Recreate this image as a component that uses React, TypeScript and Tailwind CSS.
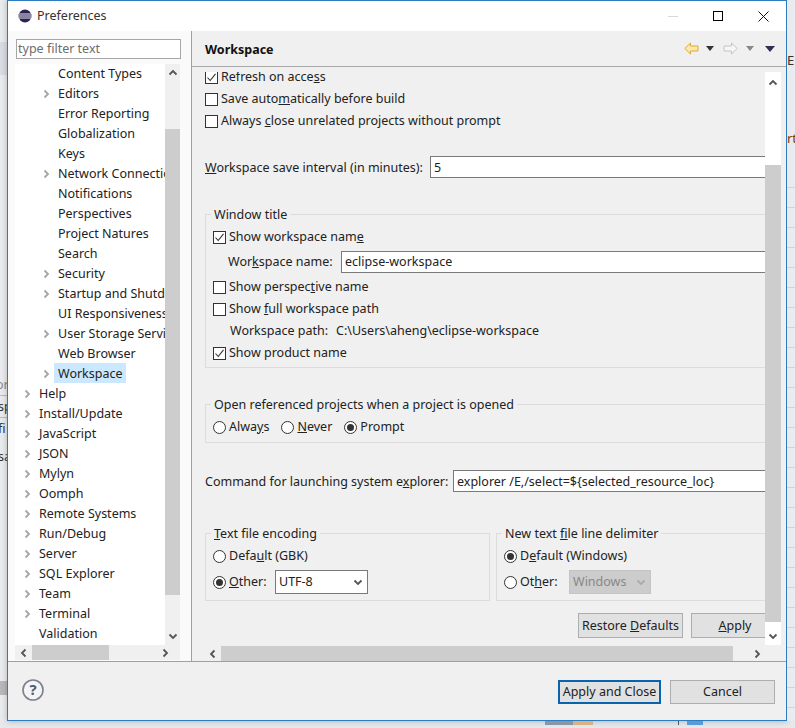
import type { ReactNode } from 'react'

const treeRows: [string, number, boolean][] = [
  ['Content Types', 2, false],
  ['Editors', 2, true],
  ['Error Reporting', 2, false],
  ['Globalization', 2, false],
  ['Keys', 2, false],
  ['Network Connections', 2, true],
  ['Notifications', 2, false],
  ['Perspectives', 2, false],
  ['Project Natures', 2, false],
  ['Search', 2, false],
  ['Security', 2, true],
  ['Startup and Shutdown', 2, true],
  ['UI Responsiveness', 2, false],
  ['User Storage Service', 2, true],
  ['Web Browser', 2, false],
  ['Workspace', 2, true],
  ['Help', 1, true],
  ['Install/Update', 1, true],
  ['JavaScript', 1, true],
  ['JSON', 1, true],
  ['Mylyn', 1, true],
  ['Oomph', 1, true],
  ['Remote Systems', 1, true],
  ['Run/Debug', 1, true],
  ['Server', 1, true],
  ['SQL Explorer', 1, true],
  ['Team', 1, true],
  ['Terminal', 1, true],
  ['Validation', 1, false],
]

const stripLines = Array.from({ length: 27 }, (_, i) => i)

function Chevron({ dir, color = '#666' }: { dir: 'up' | 'down' | 'left' | 'right'; color?: string }) {
  const d = {
    up: 'M1.5 6.5 L5 3 L8.5 6.5',
    down: 'M1.5 3.5 L5 7 L8.5 3.5',
    left: 'M6.5 1.5 L3 5 L6.5 8.5',
    right: 'M3.5 1.5 L7 5 L3.5 8.5',
  }[dir]
  return (
    <svg width="10" height="10" viewBox="0 0 10 10" className="shrink-0">
      <path d={d} fill="none" stroke={color} strokeWidth="1.8" />
    </svg>
  )
}

function Check({ on = false }: { on?: boolean }) {
  return (
    <span className="w-[13px] h-[13px] border border-[#333] bg-white shrink-0 flex items-center justify-center">
      {on && (
        <svg width="11" height="11" viewBox="0 0 11 11">
          <path d="M1.5 5.5 L4.2 8.5 L9.5 1.8" fill="none" stroke="#333" strokeWidth="1.1" />
        </svg>
      )}
    </span>
  )
}

function Radio({ on = false }: { on?: boolean }) {
  return (
    <span className="w-[13px] h-[13px] rounded-full border border-[#333] bg-white shrink-0 flex items-center justify-center">
      {on && <span className="w-[7px] h-[7px] rounded-full bg-[#333]" />}
    </span>
  )
}

function CheckRow({ on, children }: { on?: boolean; children: ReactNode }) {
  return (
    <div className="h-[22px] flex items-center gap-[3px] whitespace-nowrap">
      <Check on={on} />
      <span>{children}</span>
    </div>
  )
}

function RadioRow({ on, children }: { on?: boolean; children: ReactNode }) {
  return (
    <div className="h-[22px] flex items-center gap-[3px] whitespace-nowrap">
      <Radio on={on} />
      <span>{children}</span>
    </div>
  )
}

function Group({ title, className, children }: { title: ReactNode; className: string; children: ReactNode }) {
  return (
    <fieldset className={`border border-[#dcdcdc] pl-[7px] shrink-0 ${className}`}>
      <legend className="-ml-[2px] px-[3px] pt-px h-[18px] leading-[18px] whitespace-nowrap">{title}</legend>
      {children}
    </fieldset>
  )
}

function Field({ className, children }: { className: string; children: ReactNode }) {
  return (
    <div className={`h-[22px] border border-[#7a7a7a] bg-white flex items-center pl-[3px] whitespace-nowrap text-[#222] ${className}`}>
      <span>{children}</span>
    </div>
  )
}

function Button({ className, children }: { className: string; children: ReactNode }) {
  return (
    <div className={`flex items-center justify-center bg-[#e1e1e1] border-[#adadad] whitespace-nowrap ${className}`}>
      <span>{children}</span>
    </div>
  )
}

export default function App() {
  return (
    <div
      className="w-[795px] h-[728px] overflow-hidden bg-[#e6e8ec] flex flex-col text-[12.5px] text-[#222]"
      style={{ fontFamily: '"Noto Sans", "Liberation Sans", sans-serif' }}
    >
      <div className="h-[721px] flex shrink-0">
        <div className="w-[7px] shrink-0 bg-[#e9ebee] overflow-hidden text-[#333] flex flex-col leading-[21px]">
          <div className="mt-[42px] h-[33px] shrink-0 bg-[#d9dde3]" />
          <span className="mt-[299px] -ml-[4px] text-[#888]">or</span>
          <span className="-ml-[2px] border-t border-[#bbb]">sp</span>
          <span className="-ml-[2px] border-t border-[#bbb]">fi</span>
          <span className="-ml-[2px] mt-[7px]">sa</span>
          <div className="mt-[214px] h-[14px] shrink-0 bg-[#b8b8b8]" />
        </div>

        <div className="w-[780px] shrink-0 border border-[#2b7cc0] flex flex-col bg-[#f0f0f0] shadow-[0_0_6px_rgba(0,0,0,0.25)]">
          <div className="h-[30px] shrink-0 bg-white flex items-center pl-[10px] pr-[17px]">
            <svg width="14" height="14" viewBox="0 0 14 14">
              <circle cx="7" cy="7" r="6.5" fill="#2c2255" />
              <path d="M1 5 H13 M0.6 7 H13.4 M1 9 H13" stroke="#fff" strokeWidth="0.9" />
            </svg>
            <span className="ml-[5px] text-[#333]">Preferences</span>
            <span className="ml-auto w-[10px] h-px bg-[#d8d8d8]" />
            <span className="ml-[35px] w-[10px] h-[10px] border border-black" />
            <svg width="11" height="11" viewBox="0 0 11 11" className="ml-[35px]">
              <path d="M0.5 0.5 L10.5 10.5 M10.5 0.5 L0.5 10.5" stroke="#111" strokeWidth="1" />
            </svg>
          </div>

          <div className="h-[630px] shrink-0 flex">
            <div className="w-[184px] shrink-0 bg-[#fafafa] border-r border-[#a0a0a0] pt-[8px] pl-[7px]">
              <div className="ml-px w-[165px] h-[20px] border border-[#a6a6a6] bg-white pl-px flex items-center text-[#6d6d6d]">
                type filter text
              </div>
              <div className="mt-[5px] h-[581px] w-[165px] flex">
                <div className="w-[150px] shrink-0 bg-white overflow-hidden">
                  <div className="-mt-px">
                    {treeRows.map(([name, level, arrow]) => (
                      <div
                        key={name}
                        className={`h-[20px] flex items-center whitespace-nowrap ${level === 2 ? 'pl-[26px]' : 'pl-[7px]'}`}
                      >
                        <span className="w-[17px] h-[20px] pt-[2px] shrink-0 flex items-center">
                          {arrow && <Chevron dir="right" color="#a6a6a6" />}
                        </span>
                        <span
                          className={`h-[20px] pt-[2px] leading-[18px] ${name === 'Workspace' ? 'bg-[#cce8ff] pl-[4px] pr-[3px] -ml-[4px]' : ''}`}
                        >
                          {name}
                        </span>
                      </div>
                    ))}
                  </div>
                </div>
                <div className="w-[15px] shrink-0 bg-[#f0f0f0] flex flex-col items-center">
                  <div className="h-[65px] w-full flex justify-center pt-[4px]">
                    <Chevron dir="up" color="#555" />
                  </div>
                  <div className="h-[466px] w-full bg-[#cdcdcd]" />
                  <div className="mt-auto pb-[4px]">
                    <Chevron dir="down" color="#555" />
                  </div>
                </div>
              </div>
              <div className="w-[165px] h-[15px] bg-[#f0f0f0] flex items-center">
                <div className="w-[17px] flex justify-center">
                  <Chevron dir="left" color="#555" />
                </div>
                <div className="w-[77px] h-full bg-[#cdcdcd]" />
                <div className="ml-auto w-[50px] pl-[30px]">
                  <Chevron dir="right" color="#555" />
                </div>
              </div>
            </div>

            <div className="flex-1 min-w-0 flex flex-col">
              <div className="h-[36px] shrink-0 border-b border-[#a8a8a8] flex items-center pl-[13px] pr-[11px]">
                <span className="font-bold text-[12.5px] text-[#111] pt-[4px]">Workspace</span>
                <svg width="15" height="13" viewBox="0 0 15 13" className="ml-auto">
                  <path d="M0.8 6.5 L6.5 1 V4 H14 V9 H6.5 V12 Z" fill="#ffe9a8" stroke="#d9a93a" />
                </svg>
                <svg width="8" height="5" viewBox="0 0 8 5" className="ml-[7px]"><path d="M0 0 H8 L4 5 Z" fill="#333" /></svg>
                <svg width="15" height="13" viewBox="0 0 15 13" className="ml-[9px]">
                  <path d="M14.2 6.5 L8.5 1 V4 H1 V9 H8.5 V12 Z" fill="#f6f6f6" stroke="#c4c4c4" />
                </svg>
                <svg width="8" height="5" viewBox="0 0 8 5" className="ml-[8px]"><path d="M0 0 H8 L4 5 Z" fill="#888" /></svg>
                <svg width="10" height="6" viewBox="0 0 10 6" className="ml-[11px]"><path d="M0 0 H10 L5 6 Z" fill="#2f2f55" /></svg>
              </div>

              <div className="h-[573px] shrink-0 mt-[5px] flex">
                <div className="w-[573px] shrink-0 overflow-hidden pl-[13px]">
                  <div className="-mt-[6px] flex flex-col w-[600px]">
                    <CheckRow on>Refresh on acce<u>s</u>s</CheckRow>
                    <CheckRow>Save auto<u>m</u>atically before build</CheckRow>
                    <CheckRow>Always <u>c</u>lose unrelated projects without prompt</CheckRow>

                    <div className="mt-[24px] h-[22px] flex items-center whitespace-nowrap">
                      <span className="w-[225px] shrink-0 pt-[2px]"><u>W</u>orkspace save interval (in minutes):</span>
                      <Field className="w-[340px] pt-[2px]">5</Field>
                    </div>

                    <Group title="Window title" className="mt-[27px] h-[163px] w-[600px] pt-[3px]">
                      <CheckRow on>Show workspace nam<u>e</u></CheckRow>
                      <div className="mt-[3px] h-[22px] flex items-center whitespace-nowrap pl-[15px]">
                        <span className="w-[113px] shrink-0">Wor<u>k</u>space name:</span>
                        <Field className="w-[440px]">eclipse-workspace</Field>
                      </div>
                      <div className="mt-[3px]">
                        <CheckRow>Show perspec<u>t</u>ive name</CheckRow>
                      </div>
                      <CheckRow>Show <u>f</u>ull workspace path</CheckRow>
                      <div className="h-[22px] flex items-center whitespace-nowrap pl-[17px]">
                        <span>Workspace path:</span>
                        <span className="ml-[8px]">C:\Users\aheng\eclipse-workspace</span>
                      </div>
                      <CheckRow on>Show product name</CheckRow>
                    </Group>

                    <Group title="Open referenced projects when a project is opened" className="mt-[27px] h-[48px] w-[600px] pt-[3px]">
                      <div className="flex gap-[12px]">
                        <RadioRow>Alwa<u>y</u>s</RadioRow>
                        <RadioRow><u>N</u>ever</RadioRow>
                        <RadioRow on>Prompt</RadioRow>
                      </div>
                    </Group>

                    <div className="mt-[27px] h-[22px] flex items-center whitespace-nowrap">
                      <span className="w-[248px] shrink-0 pt-[2px]">Command for launching system e<u>x</u>plorer:</span>
                      <Field className="w-[340px] pt-[2px]">explorer /E,/select=$&#123;selected_resource_loc&#125;</Field>
                    </div>

                    <div className="mt-[32px] flex gap-[6px]">
                      <Group title={<><u>T</u>ext file encoding</>} className="h-[77px] w-[285px] pt-[3px]">
                        <RadioRow>Defa<u>u</u>lt (GBK)</RadioRow>
                        <div className="mt-[3px] flex items-center gap-[3px]">
                          <Radio on />
                          <span className="w-[43px]"><u>O</u>ther:</span>
                          <div className="w-[93px] h-[24px] bg-white border border-[#7a7a7a] flex items-center justify-between pl-[3px] pr-[4px]">
                            <span>UTF-8</span>
                            <Chevron dir="down" color="#555" />
                          </div>
                        </div>
                      </Group>
                      <Group title={<>New text <u>f</u>ile line delimiter</>} className="h-[77px] w-[290px] pt-[3px]">
                        <RadioRow on>D<u>e</u>fault (Windows)</RadioRow>
                        <div className="mt-[3px] flex items-center gap-[3px]">
                          <Radio />
                          <span className="w-[46px]">Ot<u>h</u>er:</span>
                          <div className="w-[82px] h-[24px] bg-[#cccccc] border border-[#c4c4c4] text-[#888] flex items-center justify-between pl-[3px] pr-[4px]">
                            <span>Windows</span>
                            <Chevron dir="down" color="#aaa" />
                          </div>
                        </div>
                      </Group>
                    </div>

                    <div className="mt-[12px] w-[560px] flex justify-end gap-[8px]">
                      <Button className="w-[105px] h-[25px] border pt-[2px]">Restore <u>D</u>efaults</Button>
                      <Button className="w-[74px] h-[25px] pl-[13px] pt-[2px] border border-r-0"><u>A</u>pply</Button>
                    </div>
                  </div>
                </div>
                <div className="w-[16px] shrink-0 bg-white flex flex-col items-center">
                  <div className="h-[93px] w-full flex justify-center pt-[6px] bg-white">
                    <Chevron dir="up" color="#555" />
                  </div>
                  <div className="h-[457px] w-full bg-[#cdcdcd]" />
                  <div className="mt-auto pb-[4px]">
                    <Chevron dir="down" color="#555" />
                  </div>
                </div>
              </div>

              <div className="h-[15px] shrink-0 mt-[1px] ml-[16px] w-[562px] flex items-center">
                <div className="w-[13px] flex">
                  <Chevron dir="left" color="#555" />
                </div>
                <div className="w-[512px] h-full bg-[#cdcdcd]" />
                <div className="ml-[19px]">
                  <Chevron dir="right" color="#555" />
                </div>
              </div>
            </div>
          </div>

          <div className="flex-1 border-t border-[#a0a0a0] flex items-start pt-[18px] pl-[14px] pr-[11px]">
            <svg width="22" height="22" viewBox="0 0 22 22" className="-mt-px">
              <circle cx="11" cy="11" r="10" fill="#f4f4f6" stroke="#7c7f8c" strokeWidth="1.6" />
              <text x="11" y="16" textAnchor="middle" fontSize="15" fontWeight="700" fill="#555b6b">?</text>
            </svg>
            <div className="ml-auto flex gap-[9px]">
              <Button className="w-[103px] h-[24px] border-2 !border-[#0a64ad]">Apply and Close</Button>
              <Button className="w-[105px] h-[24px] border">Cancel</Button>
            </div>
          </div>
        </div>

        <div className="flex-1 bg-[#e9ebee] overflow-hidden flex flex-col text-[#333] text-[13px]">
          <span className="mt-[51px] h-[18px] shrink-0">E</span>
          <span className="mt-[60px] h-[18px] shrink-0 text-[#7a3a10]">rt</span>
          <div className="mt-[21px] flex flex-col">
            {stripLines.map((i) => (
              <div key={i} className="h-[20px] shrink-0 border-b border-[#cfd2d6]" />
            ))}
          </div>
        </div>
      </div>
      <div className="h-[4px] flex">
        <div className="ml-[545px] w-[28px] bg-[#8a95a5]" />
        <div className="w-[20px] bg-[#d9b184]" />
        <div className="ml-[85px] w-px bg-[#555]" />
        <div className="ml-[8px] w-[16px] bg-[#5b9bd5]" />
      </div>
    </div>
  )
}
